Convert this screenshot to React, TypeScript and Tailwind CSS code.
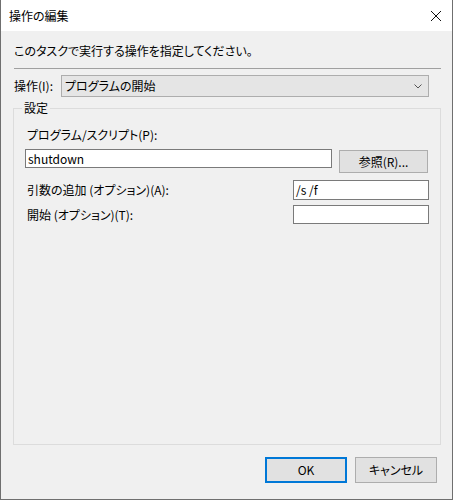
import React from "react";

const font = "font-['Yu_Gothic_UI','Meiryo_UI','Noto_Sans_CJK_JP',sans-serif] [font-feature-settings:'palt'] text-[12px] leading-[16px] text-black";

export default function App() {
  return (
    <div className="w-[454px] h-[500px] bg-white">
      <div className={`w-[453px] h-[500px] flex flex-col border-l border-r border-b border-[#6f6f6f] ${font}`}>
        {/* title bar */}
        <div className="h-[31px] bg-white flex items-center pl-[8px] pr-[4px] shrink-0">
          <span className="flex-1 text-[12px]">操作の編集</span>
          <svg width="12" height="12" viewBox="0 0 12 12" className="mr-[6px]">
            <path d="M1 1 L11 11 M11 1 L1 11" stroke="#111" strokeWidth="1" fill="none" />
          </svg>
        </div>
        {/* body */}
        <div className="flex-1 bg-[#f0f0f0] pl-[12px] flex flex-col">
          <div className="mt-[12px] ml-[1px]">このタスクで実行する操作を指定してください。</div>
          <div className="mt-[9px] ml-[1px] w-[427px] h-px bg-[#a0a0a0]" />
          <div className="mt-[6px] ml-[1px] flex items-center">
            <span className="w-[47px]">操作(I):</span>
            <div className="w-[368px] h-[22px] bg-[#e5e5e5] border border-[#adadad] flex items-center pl-[3px] pr-[6px]">
              <span className="flex-1">プログラムの開始</span>
              <svg width="8" height="5" viewBox="0 0 8 5">
                <path d="M0.5 0.5 L4 4 L7.5 0.5" stroke="#555" strokeWidth="1" fill="none" />
              </svg>
            </div>
          </div>
          {/* group box */}
          <div className="mt-[11px] w-[428px] h-[337px] border border-[#dcdcdc] flex flex-col pl-[11px]">
            <div className="-mt-[9px] ml-[-3px] w-fit bg-[#f0f0f0] px-[2px]">設定</div>
            <div className="mt-[11px] ml-[2px]">プログラム/スクリプト(P):</div>
            <div className="mt-[6px] flex items-start">
              <div className="w-[307px] h-[19px] bg-white border border-[#7a7a7a] flex items-center pl-[2px] leading-[14px]">
                shutdown
              </div>
              <div className="ml-[7px] mt-[1px] w-[89px] h-[23px] bg-[#e1e1e1] border border-[#adadad] flex items-center justify-center">
                参照(R)...
              </div>
            </div>
            <div className="mt-[7px] flex items-center">
              <span className="w-[266px] ml-[2px]">引数の追加 (オプション)(A):</span>
              <div className="w-[136px] h-[20px] bg-white border border-[#7a7a7a] flex items-center pl-[2px]">/s /f</div>
            </div>
            <div className="mt-[5px] flex items-center">
              <span className="w-[266px] ml-[2px]">開始 (オプション)(T):</span>
              <div className="w-[136px] h-[19px] bg-white border border-[#7a7a7a]" />
            </div>
          </div>
          {/* buttons */}
          <div className="mt-[12px] flex">
            <div className="ml-[252px] w-[82px] h-[26px] bg-[#e1e1e1] border-2 border-[#0078d7] flex items-center justify-center">OK</div>
            <div className="ml-[8px] w-[82px] h-[26px] bg-[#e1e1e1] border border-[#adadad] flex items-center justify-center">キャンセル</div>
          </div>
        </div>
      </div>
    </div>
  );
}
